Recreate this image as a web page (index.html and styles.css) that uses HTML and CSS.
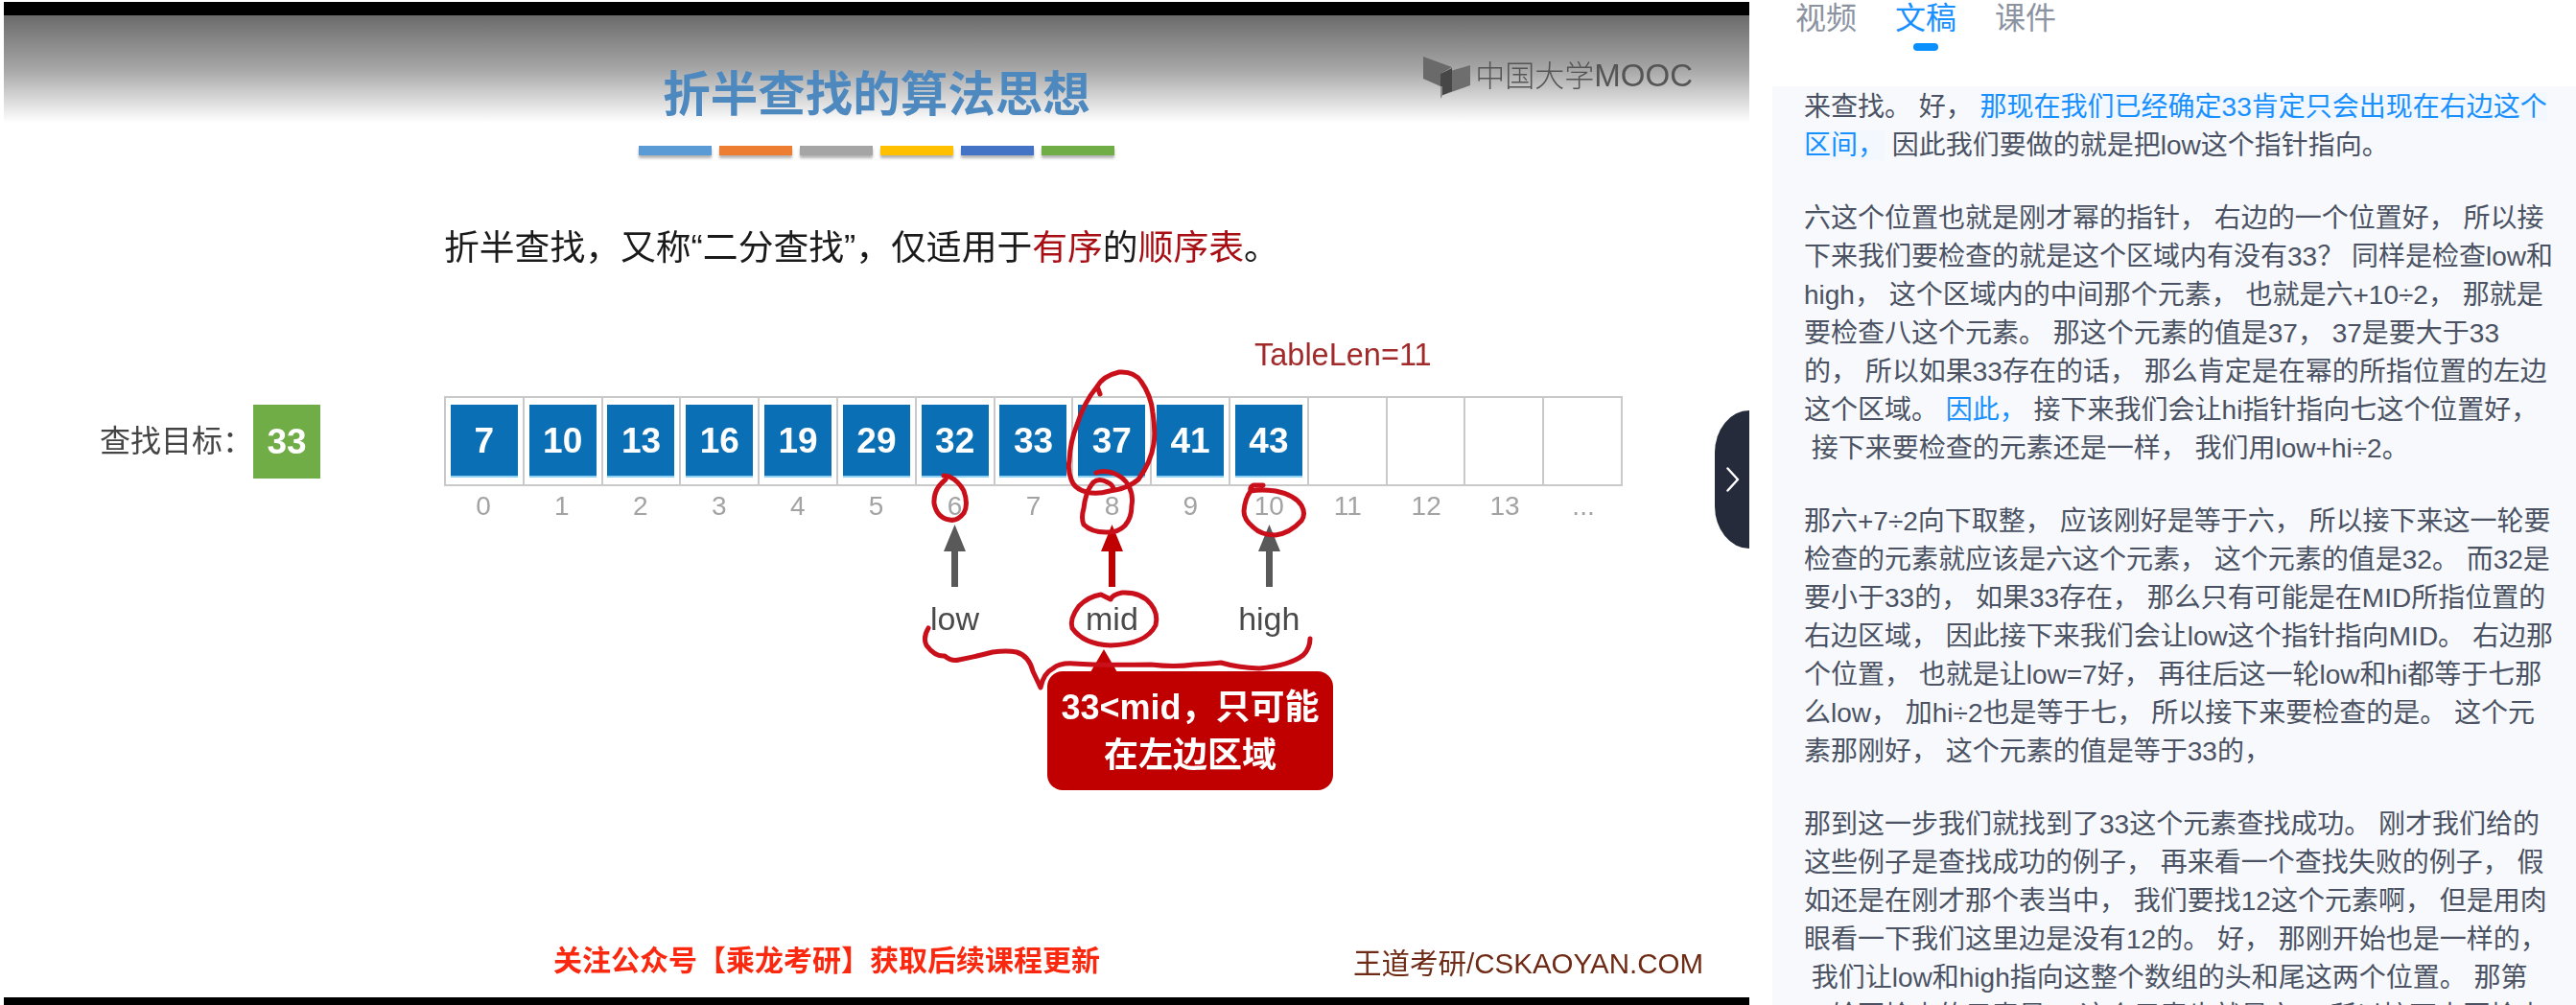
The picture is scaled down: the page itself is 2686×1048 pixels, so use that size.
FILE: index.html
```html
<!DOCTYPE html>
<html lang="zh-CN">
<head>
<meta charset="utf-8">
<title>折半查找的算法思想</title>
<link rel="stylesheet" href="styles.css">
</head>
<body>
<main class="video">
  <div class="bar-top"></div>
  <section class="slide">
    <header class="head">
      <div></div>
      <h1 class="title">折半查找的算法思想</h1>
      <div class="logo">
        <svg class="logo-icon" viewBox="1484 58 51 46" width="51" height="46">
          <polygon points="1485,59 1515,70 1503,77 1503,90 1485,82" fill="#6a6a6a"/>
          <polygon points="1503,77 1534,68 1534,89 1503,100" fill="#6e6e6e"/>
          <polygon points="1503,77 1515,71 1515,95 1503,100" fill="#474747"/>
          <polygon points="1503,90 1503,103 1505,100 1505,90" fill="#8a8a8a"/>
        </svg>
        <span class="logo-text">中国大学<span class="logo-latin">MOOC</span></span>
      </div>
    </header>
    <div class="swatches">
      <span class="swatch s1"></span><span class="swatch s2"></span><span class="swatch s3"></span>
      <span class="swatch s4"></span><span class="swatch s5"></span><span class="swatch s6"></span>
    </div>
    <p class="lead">折半查找，又称“二分查找”，仅适用于<em>有序</em>的<em>顺序表</em>。</p>
    <div class="tablelen">TableLen=11</div>
    <div class="array">
      <div class="target">
        <span class="target-label">查找目标：</span>
        <span class="target-box">33</span>
      </div>
      <div class="cells">
        <div class="cell"><b>7</b></div><div class="cell"><b>10</b></div><div class="cell"><b>13</b></div>
        <div class="cell"><b>16</b></div><div class="cell"><b>19</b></div><div class="cell"><b>29</b></div>
        <div class="cell"><b>32</b></div><div class="cell"><b>33</b></div><div class="cell"><b>37</b></div>
        <div class="cell"><b>41</b></div><div class="cell"><b>43</b></div><div class="cell"></div>
        <div class="cell"></div><div class="cell"></div><div class="cell"></div>
      </div>
    </div>
    <div class="indices">
      <span>0</span><span>1</span><span>2</span><span>3</span><span>4</span><span>5</span><span>6</span><span>7</span>
      <span>8</span><span>9</span><span>10</span><span>11</span><span>12</span><span>13</span><span>...</span>
    </div>
    <div class="pointers">
      <div class="ptr ptr-low">
        <svg class="arrow" viewBox="0 0 23 65" width="23" height="65"><polygon points="11.5,0 23,28 15,28 15,65 8,65 8,28 0,28" fill="#595959"/></svg>
        <span>low</span>
      </div>
      <div class="ptr ptr-mid">
        <svg class="arrow" viewBox="0 0 23 65" width="23" height="65"><polygon points="11.5,0 23,28 15,28 15,65 8,65 8,28 0,28" fill="#c00000"/></svg>
        <span>mid</span>
      </div>
      <div class="ptr ptr-high">
        <svg class="arrow" viewBox="0 0 23 65" width="23" height="65"><polygon points="11.5,0 23,28 15,28 15,65 8,65 8,28 0,28" fill="#595959"/></svg>
        <span>high</span>
      </div>
    </div>
    <div class="callout">33&lt;mid，只可能<br>在左边区域</div>
    <footer class="foot">
      <span class="foot-red">关注公众号【乘龙考研】获取后续课程更新</span>
      <span class="foot-brand">王道考研/CSKAOYAN.COM</span>
    </footer>
  </section>
  <div class="bar-bottom"></div>

  <svg class="ink" viewBox="4 0 1820 1048" width="1820" height="1048" fill="none" stroke="#c9101a" stroke-width="5" stroke-linecap="round" stroke-linejoin="round">
    <path d="M1147 411 L1144 403 Q1150 392 1167 388 Q1183 387 1190 398 Q1200 412 1202 430 Q1205 450 1203 463 Q1200 482 1187 500 Q1175 510 1157 512 Q1143 516 1133 513 Q1120 510 1117 500 Q1113 490 1115 480 Q1116 460 1123 443 Q1130 420 1144 403"/>
    <path d="M1143 493 Q1150 490 1160 493 Q1172 497 1177 507 Q1182 517 1180 527 Q1180 540 1173 548 Q1165 556 1153 555 Q1138 555 1130 547 Q1127 540 1130 530 Q1132 512 1140 503 Q1146 498 1155 503 Q1160 505 1161 510"/>
    <path d="M1317 506 L1307 506 Q1303 508 1304 512 Q1315 510 1330 512 Q1350 516 1357 527 Q1362 536 1357 543 Q1345 556 1330 558 Q1315 558 1307 550 Q1297 542 1297 533 Q1298 520 1304 512"/>
    <path d="M984 496 L990 497 Q1000 502 1005 512 Q1010 526 1005 535 Q998 544 990 542 Q977 540 974 525 Q973 510 986 500"/>
    <path d="M1158 625 Q1160 620 1170 618 Q1190 617 1200 630 Q1208 640 1205 652 Q1195 672 1158 673 Q1130 672 1118 655 Q1115 645 1125 632 Q1135 622 1148 620 L1158 625"/>
    <path d="M968 655 Q962 665 966 673 Q975 685 985 684 Q992 690 1000 688 Q1020 684 1035 680 Q1050 678 1060 680 Q1073 684 1077 700 L1085 717 Q1088 702 1098 697 Q1105 691 1120 692 Q1145 694 1200 693 Q1225 696 1245 693 Q1265 692 1273 691 Q1290 696 1313 697 Q1345 694 1359 683 Q1366 676 1366 666"/>
  </svg>

  <button class="handle" type="button" aria-label="收起">
    <svg viewBox="0 0 14 26" width="14" height="26" fill="none" stroke="#fff" stroke-width="2.4" stroke-linecap="round" stroke-linejoin="round"><path d="M1.5 1.5 L12 13 L1.5 24.5"/></svg>
  </button>
</main>

<aside class="panel">
  <nav class="tabs">
    <span class="tab">视频</span>
    <span class="tab tab-active">文稿</span>
    <span class="tab">课件</span>
  </nav>
  <div class="content">
<p>来查找。 好， <span class="hl">那现在我们已经确定33肯定只会出现在右边这个
区间，</span> 因此我们要做的就是把low这个指针指向。</p>
<p>六这个位置也就是刚才幂的指针， 右边的一个位置好， 所以接
下来我们要检查的就是这个区域内有没有33？ 同样是检查low和
high， 这个区域内的中间那个元素， 也就是六+10÷2， 那就是
要检查八这个元素。 那这个元素的值是37， 37是要大于33
的， 所以如果33存在的话， 那么肯定是在幂的所指位置的左边
这个区域。 <span class="link">因此，</span> 接下来我们会让hi指针指向七这个位置好，
 接下来要检查的元素还是一样， 我们用low+hi÷2。</p>
<p>那六+7÷2向下取整， 应该刚好是等于六， 所以接下来这一轮要
检查的元素就应该是六这个元素， 这个元素的值是32。 而32是
要小于33的， 如果33存在， 那么只有可能是在MID所指位置的
右边区域， 因此接下来我们会让low这个指针指向MID。 右边那
个位置， 也就是让low=7好， 再往后这一轮low和hi都等于七那
么low， 加hi÷2也是等于七， 所以接下来要检查的是。 这个元
素那刚好， 这个元素的值是等于33的，</p>
<p>那到这一步我们就找到了33这个元素查找成功。 刚才我们给的
这些例子是查找成功的例子， 再来看一个查找失败的例子， 假
如还是在刚才那个表当中， 我们要找12这个元素啊， 但是用肉
眼看一下我们这里边是没有12的。 好， 那刚开始也是一样的，
 我们让low和high指向这整个数组的头和尾这两个位置。 那第
一轮要检查的元素是， 这个元素也就是六， 所以接下来要检查</p>
  </div>
</aside>
</body>
</html>
```

FILE: styles.css
```css
* { box-sizing: border-box; }

html, body {
  margin: 0;
  height: 1048px;
  overflow: hidden;
  background: #fff;
}

body {
  display: flex;
  font-family: "Liberation Sans", "Noto Sans CJK SC", sans-serif;
}

/* ---------- video ---------- */
.video {
  position: relative;
  flex: none;
  width: 1820px;
  height: 1048px;
  margin-left: 4px;
  padding-top: 2px;
  display: flex;
  flex-direction: column;
}

.bar-top { flex: none; height: 14px; background: #000; }
.bar-bottom { flex: none; height: 8px; background: #000; }

.slide {
  flex: 1;
  display: flex;
  flex-direction: column;
  min-height: 0;
  background: #fff;
  filter: blur(0.6px);
}

.head {
  flex: none;
  height: 112px;
  display: grid;
  grid-template-columns: 1fr auto 1fr;
  align-items: start;
  background: linear-gradient(#6b6b6b, #a6a6a6 50%, #fff);
}

.title {
  margin: 55px 0 0;
  font-size: 49.5px;
  line-height: 56px;
  font-weight: 700;
  color: #4d88bf;
  white-space: nowrap;
}

.logo {
  justify-self: end;
  display: flex;
  align-items: center;
  gap: 4px;
  margin: 42px 59px 0 0;
  height: 46px;
  color: #555;
}

.logo-text { font-size: 31px; line-height: 46px; white-space: nowrap; font-weight: 300; position: relative; top: -2px; }
.logo-latin { font-size: 33px; }

.swatches {
  flex: none;
  display: flex;
  justify-content: center;
  gap: 8px;
  height: 10px;
  margin-top: 24px;
}

.swatch { width: 76px; box-shadow: 0 3px 3px rgba(0, 0, 0, .3); }
.s1 { background: #5b9bd5; }
.s2 { background: #ed7d31; }
.s3 { background: #a5a5a5; }
.s4 { background: #ffc000; }
.s5 { background: #4472c4; }
.s6 { background: #70ad47; }

.lead {
  flex: none;
  margin: 75px 0 0 459px;
  font-size: 36.8px;
  line-height: 44px;
  color: #1a1a1a;
  white-space: nowrap;
}

.lead em { font-style: normal; color: #a80f14; }

.tablelen {
  flex: none;
  margin: 74px 0 0 1304px;
  font-size: 32.5px;
  line-height: 30px;
  color: #a12a2a;
}

.array {
  flex: none;
  display: flex;
  margin-top: 28px;
  align-items: stretch;
}

.target {
  flex: none;
  width: 459px;
  padding: 9px 0 0 100px;
  display: flex;
  align-items: flex-start;
}

.target-label {
  flex: none;
  width: 160px;
  font-size: 32px;
  line-height: 77px;
  color: #444;
  white-space: nowrap;
}

.target-box {
  width: 70px;
  height: 77px;
  background: #70ad47;
  color: #fff;
  font-weight: 700;
  font-size: 37px;
  line-height: 77px;
  text-align: center;
}

.cells {
  flex: none;
  width: 1229px;
  height: 94px;
  display: grid;
  grid-template-columns: repeat(15, 1fr);
  border: 2px solid #c9c9c9;
  border-right-width: 0;
}

.cell {
  border-right: 2px solid #c9c9c9;
  display: flex;
  align-items: center;
  justify-content: center;
}

.cell b {
  width: 70px;
  height: 76px;
  background: #0b6fb5;
  border-bottom: 2px solid #8fd0f2;
  color: #fff;
  font-size: 37px;
  line-height: 76px;
  text-align: center;
}

.indices,
.pointers {
  flex: none;
  width: 1229px;
  margin-left: 459px;
  display: grid;
  grid-template-columns: repeat(15, 1fr);
}

.indices {
  margin-top: 6px;
  font-size: 28px;
  line-height: 30px;
  color: #a3a3a3;
  text-align: center;
}

.pointers { margin-top: 4px; }

.ptr {
  grid-row: 1;
  display: flex;
  flex-direction: column;
  align-items: center;
  gap: 15px;
  font-size: 34px;
  line-height: 36px;
  color: #4a4a4a;
}

.arrow { display: block; }
.ptr-low { grid-column: 7; }
.ptr-mid { grid-column: 9; }
.ptr-high { grid-column: 11; }

.callout {
  flex: none;
  position: relative;
  width: 298px;
  height: 124px;
  margin: 37px 0 0 1088px;
  padding-top: 13px;
  border-radius: 16px;
  background: #c00000;
  color: #fff;
  font-size: 36px;
  line-height: 50px;
  font-weight: 700;
  text-align: center;
  white-space: nowrap;
}

.callout::before {
  content: "";
  position: absolute;
  left: 45px;
  top: -23px;
  border-style: solid;
  border-width: 0 14px 24px;
  border-color: transparent transparent #c00000;
}

.foot {
  flex: none;
  margin-top: auto;
  padding: 0 48px 18px 573px;
  display: flex;
  justify-content: space-between;
  align-items: flex-end;
  white-space: nowrap;
}

.foot-red {
  margin-bottom: 3px;
  font-size: 30px;
  line-height: 34px;
  font-weight: 700;
  color: #f9280f;
}

.foot-brand {
  font-size: 29.5px;
  line-height: 34px;
  color: #6e2a14;
}

.ink {
  position: absolute;
  left: 0;
  top: 0;
  filter: blur(0.4px);
  pointer-events: none;
}

.handle {
  position: absolute;
  right: 0;
  top: 428px;
  width: 36px;
  height: 144px;
  padding: 0 0 0 12px;
  border: 0;
  border-radius: 36px 0 0 36px / 44px 0 0 44px;
  background: #252b3a;
  display: flex;
  align-items: center;
  justify-content: flex-start;
}

.handle svg { display: block; }

/* ---------- panel ---------- */
.panel {
  flex: 1;
  min-width: 0;
  display: flex;
  flex-direction: column;
  height: 1048px;
}

.tabs {
  flex: none;
  height: 90px;
  padding-left: 48px;
  display: flex;
  align-items: flex-start;
  gap: 40px;
}

.tab {
  position: relative;
  font-size: 32px;
  line-height: 38px;
  color: #8b93a1;
}

.tab-active { color: #1890ff; }

.tab-active::after {
  content: "";
  position: absolute;
  left: 19px;
  top: 45px;
  width: 26px;
  height: 8px;
  border-radius: 4px;
  background: #0a8fff;
}

.content {
  flex: 1;
  min-height: 0;
  overflow: hidden;
  margin-left: 24px;
  padding: 2px 0 0 33px;
  background: #f7f9fc;
  font-size: 28px;
  line-height: 40px;
  color: #4a5263;
}

.content p {
  margin: 0 0 36px;
  white-space: pre;
}

.hl { color: #1890ff; background: #f2f8fe; }
.link { color: #1890ff; }
```
